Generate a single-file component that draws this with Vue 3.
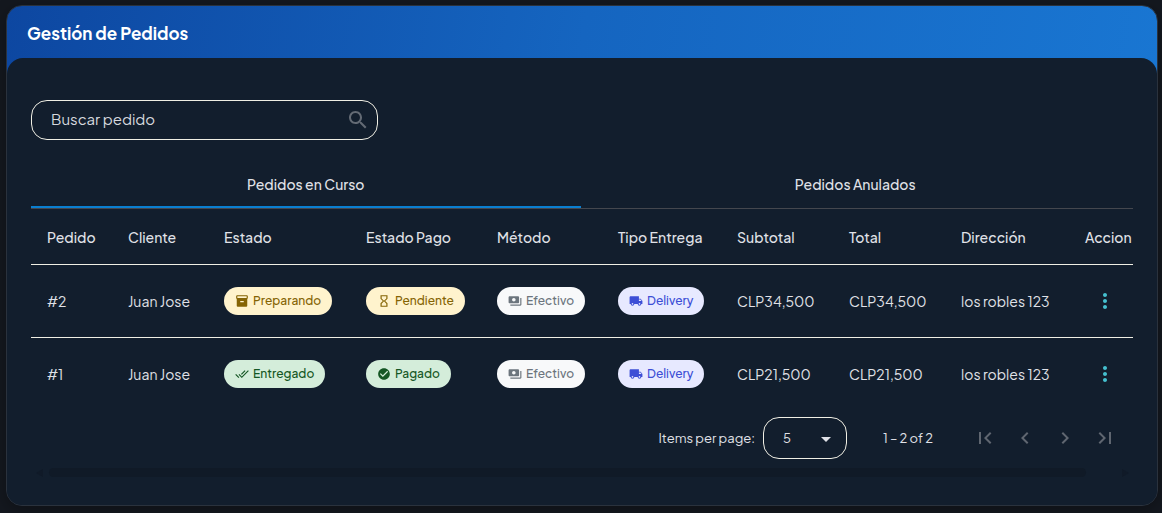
<script setup>
import { ref } from 'vue'

const search = ref('')
const activeTab = ref(0)
const pageSize = ref('5')
const tabs = ['Pedidos en Curso', 'Pedidos Anulados']
const columns = [
  { label: 'Pedido', key: 'id' },
  { label: 'Cliente', key: 'client' },
  { label: 'Estado', key: 'status' },
  { label: 'Estado Pago', key: 'payment' },
  { label: 'Método', key: 'method' },
  { label: 'Tipo Entrega', key: 'delivery' },
  { label: 'Subtotal', key: 'subtotal' },
  { label: 'Total', key: 'total' },
  { label: 'Dirección', key: 'address' },
  { label: 'Accion', key: 'action' }
]
const icons = {
  archive: 'M20 2H4c-1 0-2 .9-2 2v3.01c0 .72.43 1.34 1 1.69V20c0 1.1 1.1 2 2 2h14c.9 0 2-.9 2-2V8.7c.57-.35 1-.97 1-1.69V4c0-1.1-1-2-2-2zm-5 12H9v-2h6v2zm5-7H4V4h16v3z',
  hourglass: 'M6 2v6h.01L6 8.01 10 12l-4 4 .01.01H6V22h12v-5.99h-.01L18 16l-4-4 4-3.99-.01-.01H18V2H6zm10 14.500V20H8v-3.500l4-4 4 4zm-4-5l-4-4V4h8v3.500l-4 4z',
  doneAll: 'M18 7l-1.410-1.410-6.340 6.340 1.410 1.410L18 7zm4.240-1.410L11.660 16.170 7.480 12l-1.410 1.410L11.660 19l12-12-1.420-1.410zM.41 13.410L6 19l1.410-1.410L1.830 12 .41 13.410z',
  check: 'M12 2C6.480 2 2 6.480 2 12s4.480 10 10 10 10-4.480 10-10S17.520 2 12 2zm-2 15l-5-5 1.410-1.410L10 14.170l7.590-7.590L19 8l-9 9z',
  payments: 'M19 14V6c0-1.100-.9-2-2-2H3c-1.100 0-2 .9-2 2v8c0 1.100.9 2 2 2h14c1.100 0 2-.9 2-2zm-9-1c-1.660 0-3-1.340-3-3s1.340-3 3-3 3 1.340 3 3-1.340 3-3 3zm13-6v11c0 1.100-.9 2-2 2H4v-2h17V7h2z',
  truck: 'M20 8h-3V4H3c-1.100 0-2 .9-2 2v11h2c0 1.660 1.340 3 3 3s3-1.340 3-3h6c0 1.660 1.340 3 3 3s3-1.340 3-3h2v-5l-3-4zM6 18.500c-.83 0-1.500-.67-1.500-1.500s.67-1.500 1.500-1.500 1.500.67 1.500 1.500-.67 1.500-1.500 1.500zm13.500-9l1.960 2.500H17V9.500h2.500zm-1.500 9c-.83 0-1.500-.67-1.500-1.500s.67-1.500 1.500-1.500 1.500.67 1.500 1.500-.67 1.500-1.500 1.500z'
}
const cash = { text: 'Efectivo', icon: 'payments', tone: 'plain' }
const delivery = { text: 'Delivery', icon: 'truck', tone: 'indigo' }
const orders = [
  {
    id: '#2', client: 'Juan Jose', subtotal: 'CLP34,500', total: 'CLP34,500', address: 'los robles 123',
    status: { text: 'Preparando', icon: 'archive', tone: 'amber' },
    payment: { text: 'Pendiente', icon: 'hourglass', tone: 'amber' },
    method: cash, delivery
  },
  {
    id: '#1', client: 'Juan Jose', subtotal: 'CLP21,500', total: 'CLP21,500', address: 'los robles 123',
    status: { text: 'Entregado', icon: 'doneAll', tone: 'green' },
    payment: { text: 'Pagado', icon: 'check', tone: 'green' },
    method: cash, delivery
  }
]
const pagers = [
  { label: 'First page', d: 'M18.410 16.590L13.820 12l4.590-4.590L17 6l-6 6 6 6zM6 6h2v12H6z' },
  { label: 'Previous page', d: 'M15.410 7.410L14 6l-6 6 6 6 1.410-1.410L10.830 12z' },
  { label: 'Next page', d: 'M10 6L8.590 7.410 13.170 12l-4.580 4.590L10 18l6-6z' },
  { label: 'Last page', d: 'M5.590 7.410L10.180 12l-4.590 4.590L7 18l6-6-6-6zM16 6h2v12h-2z' }
]
</script>

<template>
  <main class="card">
    <header class="card-header"><h1>Gestión de Pedidos</h1></header>
    <section class="card-body">
      <div class="search">
        <input v-model="search" type="text" placeholder="Buscar pedido" aria-label="Buscar pedido">
        <svg viewBox="0 0 24 24" aria-hidden="true"><path d="M15.500 14h-.79l-.28-.27C15.410 12.590 16 11.110 16 9.500 16 5.910 13.090 3 9.500 3S3 5.910 3 9.500 5.910 16 9.500 16c1.610 0 3.090-.59 4.230-1.570l.27.28v.79l5 4.990L20.490 19l-4.990-5zm-6 0C7.010 14 5 11.990 5 9.500S7.010 5 9.500 5 14 7.010 14 9.500 11.990 14 9.500 14z"/></svg>
      </div>

      <div class="tabs" role="tablist">
        <button
          v-for="(tab, i) in tabs" :key="tab" type="button" role="tab"
          :aria-selected="activeTab === i" :class="{ active: activeTab === i }" @click="activeTab = i"
        >{{ tab }}</button>
      </div>

      <div class="table-wrap">
        <table>
          <colgroup><col v-for="c in columns" :key="c.key" :class="'col-' + c.key"></colgroup>
          <thead>
            <tr><th v-for="c in columns" :key="c.key" scope="col">{{ c.label }}</th></tr>
          </thead>
          <tbody>
            <tr v-for="order in orders" :key="order.id">
              <td v-for="c in columns" :key="c.key">
                <button v-if="c.key === 'action'" class="more" type="button" :aria-label="'Acciones ' + order.id">
                  <svg viewBox="0 0 24 24"><path d="M12 8c1.100 0 2-.9 2-2s-.9-2-2-2-2 .9-2 2 .9 2 2 2zm0 2c-1.100 0-2 .9-2 2s.9 2 2 2 2-.9 2-2-.9-2-2-2zm0 6c-1.100 0-2 .9-2 2s.9 2 2 2 2-.9 2-2-.9-2-2-2z"/></svg>
                </button>
                <span v-else-if="order[c.key].icon" class="pill" :class="order[c.key].tone">
                  <svg viewBox="0 0 24 24" aria-hidden="true"><path :d="icons[order[c.key].icon]"/></svg>
                  <span>{{ order[c.key].text }}</span>
                </span>
                <template v-else>{{ order[c.key] }}</template>
              </td>
            </tr>
          </tbody>
        </table>
      </div>

      <footer class="paginator">
        <label for="page-size">Items per page:</label>
        <div class="select">
          <select id="page-size" v-model="pageSize">
            <option>5</option><option>10</option><option>25</option>
          </select>
          <svg viewBox="0 0 10 5" aria-hidden="true"><path d="M0 0h10L5 5z"/></svg>
        </div>
        <span class="range">1 – 2 of 2</span>
        <nav aria-label="Paginación">
          <button v-for="p in pagers" :key="p.label" type="button" disabled :aria-label="p.label">
            <svg viewBox="0 0 24 24"><path :d="p.d"/></svg>
          </button>
        </nav>
      </footer>

      <div class="scrollbar" aria-hidden="true">
        <svg viewBox="0 0 7 8"><path d="M7 0v8L0 4z"/></svg>
        <span></span>
        <svg viewBox="0 0 7 8"><path d="M0 0v8l7-4z"/></svg>
      </div>
    </section>
  </main>
</template>

<style>
body { background: #14181f; }
</style>

<style scoped>
.card {
  box-sizing: border-box;
  margin: 5px 4px 7px 6px;
  border: 1px solid #2a323d;
  border-radius: 16px;
  overflow: hidden;
  background: linear-gradient(100deg, #0d47a1 0%, #1565c0 50%, #1976d2 100%) top / 100% 72px no-repeat #121e2d;
  box-shadow: 0 4px 16px rgba(0, 0, 0, 0.3);
  color: #e0e2e8;
  font: 400 14px/20px "Plus Jakarta Sans", Inter, sans-serif;
}
button, input, select { font: inherit; color: inherit; }
button { border: 0; padding: 0; background: none; cursor: pointer; }
svg { fill: currentColor; display: block; flex: none; }
.card-header { padding: 16px 20px; }
h1 { margin: 0; font-size: 17px; line-height: 22px; height: 20px; font-weight: 700; color: #fff; }
.card-body {
  border-radius: 16px 16px 0 0;
  background: #121e2d;
  padding: 42px 24px 28px;
}
.search {
  box-sizing: border-box;
  display: flex;
  align-items: center;
  width: 347px;
  max-width: 100%;
  height: 40px;
  padding: 0 7px 0 19px;
  border: 1px solid #f0efe4;
  border-radius: 16px;
}
.search input { flex: 1; min-width: 0; height: 36px; padding: 0 0 4px; box-sizing: border-box; border: 0; outline: 0; background: none; font-size: 15px; }
.search input::placeholder { color: #d5d8de; opacity: 1; }
.search svg { width: 24px; height: 24px; color: #636a74; }
.tabs { display: flex; margin-top: 20px; padding-right: 3px; border-bottom: 1px solid #44474e; }
.tabs button { flex: 1; box-sizing: border-box; height: 48px; padding-top: 2px; border-bottom: 2px solid transparent; font-weight: 500; }
.tabs button.active { border-bottom-color: #0a7fd0; }
.table-wrap { overflow: hidden; }
table { width: 100%; table-layout: fixed; border-collapse: separate; border-spacing: 0; }
th, td { box-sizing: border-box; padding: 0 0 0 16px; text-align: left; white-space: nowrap; border-bottom: 1px solid #f0efe4; }
th { height: 56px; font-weight: 500; }
td { height: 73px; }
tbody tr:last-child td { height: 72px; border-bottom: 0; }
.col-id { width: 81px; }
.col-client { width: 96px; }
.col-status { width: 142px; }
.col-payment { width: 131px; }
.col-method { width: 121px; }
.col-delivery { width: 119px; }
.col-subtotal { width: 112px; }
.col-total { width: 112px; }
.col-address { width: 124px; }
.col-action { width: 64px; }
.pill { display: inline-flex; align-items: center; gap: 4px; height: 28px; padding: 0 11px; border-radius: 14px; font-size: 12px; font-weight: 500; vertical-align: middle; }
.pill svg { width: 14px; height: 14px; }
.amber { background: #fff3cd; color: #856404; }
.green { background: #d4edda; color: #155724; }
.plain { background: #f8f9fa; color: #6c757d; }
.indigo { background: #e7e9ff; color: #3d4fd6; }
.more { display: block; width: 40px; height: 40px; padding: 8px; color: #45c0cf; }
.more svg { width: 24px; height: 24px; }
.paginator { display: flex; align-items: center; justify-content: flex-end; height: 56px; font-size: 13px; }
.select { position: relative; margin-left: 8px; }
.select select { display: block; appearance: none; width: 84px; height: 42px; padding: 0 19px; border: 1px solid #f0efe4; border-radius: 16px; background: #121e2d; }
.select svg { position: absolute; right: 16px; top: 20px; width: 10px; height: 5px; pointer-events: none; }
.range { margin: 0 32px 0 36px; }
.paginator nav { display: flex; margin-right: 8px; }
.paginator nav button { display: grid; place-items: center; width: 40px; height: 40px; color: #5f6670; cursor: default; }
.paginator nav svg { width: 24px; height: 24px; }
.scrollbar { display: flex; align-items: center; margin: 2px 4px 0 5px; color: #101a28; }
.scrollbar span { flex: 1; height: 9px; margin: 0 36px 0 6px; border-radius: 5px; background: #101a27; }
.scrollbar svg { width: 7px; height: 8px; }
</style>
